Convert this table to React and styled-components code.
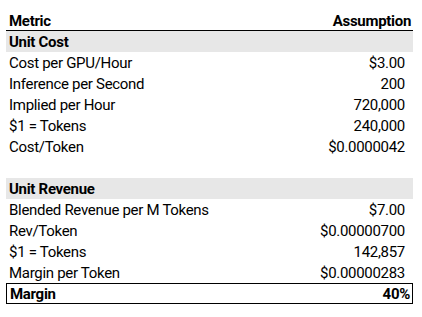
import React from 'react';
import styled, { createGlobalStyle } from 'styled-components';

const GlobalStyle = createGlobalStyle`
  html, body {
    margin: 0;
    padding: 0;
    background: #fff;
  }
  body {
    font-family: Roboto, "Liberation Sans", sans-serif;
    color: #000;
  }
`;

const Sheet = styled.div`
  width: 407px;
  padding: 10px 0 0 6px;
  font-size: 15px;
  letter-spacing: -0.3px;
`;

const Row = styled.div`
  display: flex;
  justify-content: space-between;
  align-items: center;
  height: 21px;
  box-sizing: border-box;
  padding: 1px ${(p) => (p.$tight ? 2 : 8)}px 0 3px;
  font-weight: ${(p) => (p.$bold ? 700 : 400)};
  background: ${(p) => (p.$band ? '#e7e7e7' : 'transparent')};
`;

const HeaderRow = styled(Row)`
  border-bottom: 1px solid #000;
`;

const TotalRow = styled(Row)`
  border: 1px solid #000;
`;

const sections = [
  {
    title: 'Unit Cost',
    rows: [
      ['Cost per GPU/Hour', '$3.00'],
      ['Inference per Second', '200'],
      ['Implied per Hour', '720,000'],
      ['$1 = Tokens', '240,000'],
      ['Cost/Token', '$0.0000042'],
    ],
  },
  {
    title: 'Unit Revenue',
    rows: [
      ['Blended Revenue per M Tokens', '$7.00'],
      ['Rev/Token', '$0.00000700'],
      ['$1 = Tokens', '142,857'],
      ['Margin per Token', '$0.00000283'],
    ],
  },
];

function App() {
  return (
    <>
      <GlobalStyle />
      <Sheet>
        <HeaderRow $bold $tight>
          <span>Metric</span>
          <span>Assumption</span>
        </HeaderRow>
        {sections.map((s, i) => (
          <React.Fragment key={s.title}>
            {i > 0 && <Row />}
            <Row $bold $band>
              <span>{s.title}</span>
            </Row>
            {s.rows.map(([label, value]) => (
              <Row key={label + value}>
                <span>{label}</span>
                <span>{value}</span>
              </Row>
            ))}
          </React.Fragment>
        ))}
        <TotalRow $bold $tight>
          <span>Margin</span>
          <span>40%</span>
        </TotalRow>
      </Sheet>
    </>
  );
}

export default App;
